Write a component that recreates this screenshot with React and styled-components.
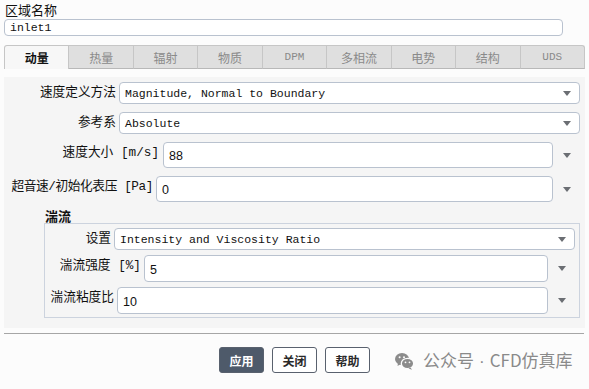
import React from "react";
import styled, { createGlobalStyle } from "styled-components";

const Global = createGlobalStyle`
  html, body {
    margin: 0;
    padding: 0;
    background: #fcfcfc;
  }
  body {
    font-family: "Noto Sans CJK SC", sans-serif;
    color: #111;
  }
`;

const Page = styled.div`
  position: relative;
  width: 589px;
  height: 389px;
  padding: 0 4px;
  box-sizing: border-box;
  overflow: hidden;
`;

const Title = styled.div`
  padding: 2px 0 0 1px;
  font-size: 13px;
  line-height: 16px;
  height: 17px;
`;

const NameInput = styled.div`
  width: 559px;
  height: 17px;
  box-sizing: border-box;
  border: 1px solid #b9c2cf;
  border-radius: 4px;
  background: #fff;
  padding-left: 5px;
  font-family: "Liberation Mono", monospace;
  font-size: 11.5px;
  line-height: 15px;
`;

const Tabs = styled.div`
  display: flex;
  margin-top: 9px;
  width: 581px;
  height: 24px;
`;

const Tab = styled.div`
  flex: 1;
  display: flex;
  align-items: center;
  justify-content: center;
  box-sizing: border-box;
  border: 1px solid #c6c6c6;
  border-left: ${(p) => (p.$first ? "1px solid #c6c6c6" : "none")};
  border-bottom: ${(p) => (p.$active ? "none" : "1px solid #b8b8b8")};
  border-radius: ${(p) => (p.$first ? "3px 0 0 0" : p.$last ? "0 3px 0 0" : "0")};
  background: ${(p) => (p.$active ? "#f7f7f7" : "#dfdfdf")};
  color: ${(p) => (p.$active ? "#111" : "#8a8a8a")};
  font-weight: ${(p) => (p.$active ? 700 : 400)};
  font-family: ${(p) => (p.$mono ? `"Liberation Mono", monospace` : `"Noto Sans CJK SC", sans-serif`)};
  font-size: ${(p) => (p.$mono ? "11px" : "12px")};
`;

const Panel = styled.div`
  margin-top: 8px;
  width: 581px;
  height: 251px;
  box-sizing: border-box;
  background: #f5f5f5;
  padding: 5px 5px 0 4px;
  display: flex;
  flex-direction: column;
  gap: 8px;
`;

const Row = styled.div`
  display: flex;
  align-items: flex-start;
`;

const Label = styled.div`
  flex: none;
  min-width: ${(p) => p.$w}px;
  margin-right: ${(p) => p.$gap || 3}px;
  padding-top: 2px;
  text-align: right;
  white-space: nowrap;
  font-family: "Liberation Mono", "Noto Sans CJK SC", monospace;
  font-size: 12.7px;
  letter-spacing: ${(p) => (p.$tight ? "-0.4px" : "0")};
  line-height: 18px;
  color: #111;
`;

const Select = styled.div`
  flex: 1;
  display: flex;
  align-items: center;
  height: 22px;
  box-sizing: border-box;
  border: 1px solid #b9c2cf;
  border-radius: 4px;
  background: #fff;
  padding: 0 8px 0 5px;
  font-family: "Liberation Mono", monospace;
  font-size: 11.5px;
  color: #111;
`;

const Value = styled.span`
  flex: 1;
  white-space: nowrap;
`;

const Arrow = styled.span`
  width: 0;
  height: 0;
  border-left: 4.5px solid transparent;
  border-right: 4.5px solid transparent;
  border-top: 5px solid #6b6e73;
`;

const NumInput = styled.div`
  flex: 1;
  display: flex;
  align-items: center;
  height: ${(p) => p.$h || 26}px;
  box-sizing: border-box;
  border: 1px solid #b9c2cf;
  border-radius: 4px;
  background: #fff;
  padding: 2px 0 0 5px;
  font-family: "Liberation Sans", sans-serif;
  font-size: 12.5px;
`;

const Spin = styled.div`
  flex: none;
  width: 27px;
  height: ${(p) => p.$h || 26}px;
  display: flex;
  align-items: center;
  justify-content: center;
`;

const GroupTitle = styled.div`
  margin: -2px 0 -8px 37px;
  font-size: 13px;
  font-weight: 700;
  line-height: 15px;
  height: 15px;
`;

const Group = styled.div`
  margin-left: 36px;
  border: 1px solid #ccd3de;
  padding: 4px 4px 3px 4px;
  display: flex;
  flex-direction: column;
  gap: 5px;
`;

const Divider = styled.div`
  margin-top: 5px;
  width: 580px;
  height: 1px;
  background: #a6a6a6;
`;

const Footer = styled.div`
  display: flex;
  justify-content: center;
  gap: 8px;
  padding-top: 13px;
`;

const Button = styled.div`
  width: 45px;
  height: 26px;
  box-sizing: border-box;
  display: flex;
  align-items: center;
  justify-content: center;
  border: 1px solid #59616e;
  border-radius: 3px;
  background: ${(p) => (p.$primary ? "#4e5a6a" : "#fff")};
  color: ${(p) => (p.$primary ? "#fff" : "#2a2a2a")};
  font-size: 12px;
  font-weight: 700;
`;

const Watermark = styled.div`
  position: absolute;
  left: 395px;
  top: 349px;
  display: flex;
  align-items: center;
  gap: 9px;
  color: #8a8a8a;
  font-family: "Noto Sans CJK SC", sans-serif;
  font-size: 17px;
  line-height: 22px;
`;

const Dot = styled.span`
  font-family: "Liberation Sans", sans-serif;
  margin: 0 5px;
`;

const tabs = ["动量", "热量", "辐射", "物质", "DPM", "多相流", "电势", "结构", "UDS"];

const WeChat = () => (
  <svg width="19" height="18" viewBox="0 0 19 18">
    <ellipse cx="7" cy="7" rx="7" ry="6" fill="#8c8c8c" />
    <path d="M3 11 L2.5 14 L6 12 Z" fill="#8c8c8c" />
    <ellipse cx="12.5" cy="11.5" rx="6.2" ry="5.2" fill="#8c8c8c" stroke="#fcfcfc" strokeWidth="1.3" />
    <path d="M15.5 15.5 L17 17.8 L13.5 16.4 Z" fill="#8c8c8c" />
    <circle cx="4.6" cy="5.2" r="1" fill="#fcfcfc" />
    <circle cx="9" cy="5.2" r="1" fill="#fcfcfc" />
    <circle cx="10.5" cy="10.3" r="0.9" fill="#fcfcfc" />
    <circle cx="14.5" cy="10.3" r="0.9" fill="#fcfcfc" />
  </svg>
);

const App = () => {
  return (
    <Page>
      <Global />
      <Title>区域名称</Title>
      <NameInput>inlet1</NameInput>
      <Tabs>
        {tabs.map((t, i) => (
          <Tab
            key={t}
            $active={i === 0}
            $first={i === 0}
            $last={i === tabs.length - 1}
            $mono={/^[A-Z]+$/.test(t)}
          >
            {t}
          </Tab>
        ))}
      </Tabs>
      <Panel>
        <Row>
          <Label $w={108}>速度定义方法</Label>
          <Select>
            <Value>Magnitude, Normal to Boundary</Value>
            <Arrow />
          </Select>
        </Row>
        <Row>
          <Label $w={108}>参考系</Label>
          <Select>
            <Value>Absolute</Value>
            <Arrow />
          </Select>
        </Row>
        <Row>
          <Label $w={151} $gap={4}>速度大小 [m/s]</Label>
          <NumInput>88</NumInput>
          <Spin>
            <Arrow />
          </Spin>
        </Row>
        <Row>
          <Label $w={145} $gap={3} $tight>超音速/初始化表压 [Pa]</Label>
          <NumInput>0</NumInput>
          <Spin>
            <Arrow />
          </Spin>
        </Row>
        <GroupTitle>湍流</GroupTitle>
        <Group>
          <Row>
            <Label $w={62}>设置</Label>
            <Select>
              <Value>Intensity and Viscosity Ratio</Value>
              <Arrow />
            </Select>
          </Row>
          <Row>
            <Label $w={92}>湍流强度 [%]</Label>
            <NumInput $h={27}>5</NumInput>
            <Spin $h={27}>
              <Arrow />
            </Spin>
          </Row>
          <Row>
            <Label $w={65}>湍流粘度比</Label>
            <NumInput $h={27}>10</NumInput>
            <Spin $h={27}>
              <Arrow />
            </Spin>
          </Row>
        </Group>
      </Panel>
      <Divider />
      <Footer>
        <Button $primary>应用</Button>
        <Button>关闭</Button>
        <Button>帮助</Button>
      </Footer>
      <Watermark>
        <WeChat />
        <span>
          公众号<Dot>·</Dot>CFD仿真库
        </span>
      </Watermark>
    </Page>
  );
};

export default App;
